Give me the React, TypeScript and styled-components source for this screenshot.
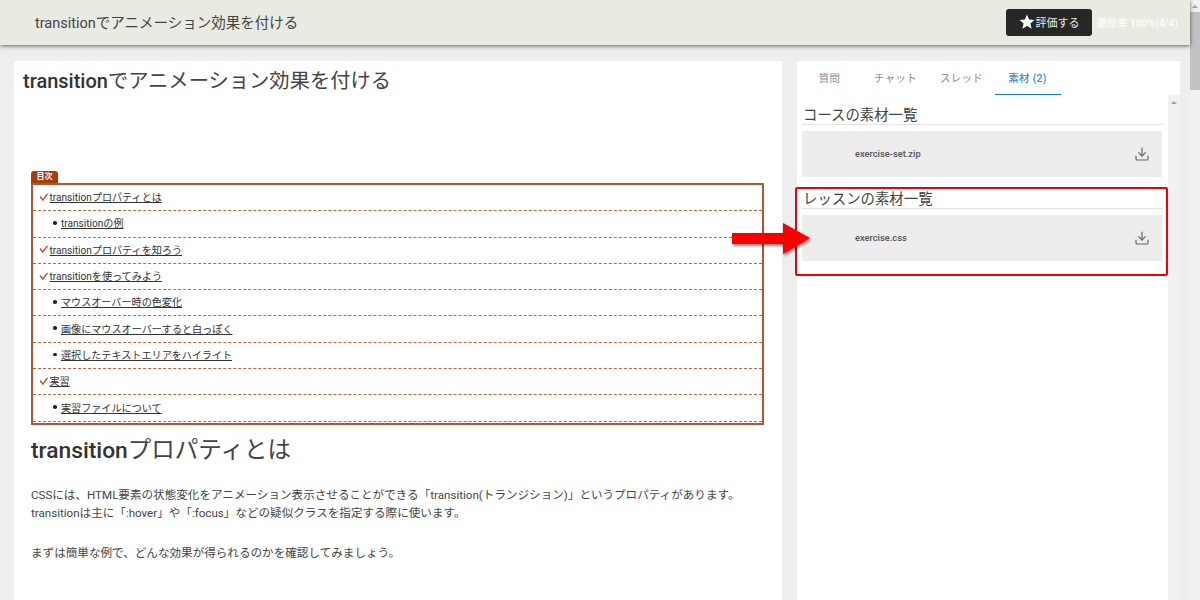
import React from "react";
import styled, { createGlobalStyle } from "styled-components";
import { Download } from "lucide-react";
import { MdStar } from "react-icons/md";

const Global = createGlobalStyle`
  html, body { margin: 0; padding: 0; height: 600px; overflow: hidden; background: #eeeeee; }
  body { font-family: Roboto, "Noto Sans CJK JP", sans-serif; color: #333; }
  * { box-sizing: border-box; }
`;

const Page = styled.div`
  position: relative;
  display: flex;
  width: 1200px;
  height: 600px;
  overflow: hidden;
`;
const Main = styled.div`
  flex: 0 0 1190px;
  display: flex;
  flex-direction: column;
  min-width: 0;
`;
const Header = styled.header`
  position: relative;
  z-index: 2;
  flex: 0 0 45px;
  display: flex;
  align-items: center;
  padding: 0 12px 0 35px;
  background: #e9eae2;
  box-shadow: 0 1px 4px rgba(0, 0, 0, 0.6);
`;
const HeaderTitle = styled.div`
  flex: 1;
  margin-top: -2px;
  font-size: 14.5px;
  color: #444;
`;
const RateButton = styled.button`
  display: flex;
  align-items: center;
  justify-content: center;
  gap: 0;
  width: 86px;
  height: 27px;
  padding: 0 1px 2px 0;
  border: 0;
  border-radius: 3px;
  background: #262626;
  color: #e8e8e8;
  font: inherit;
  font-size: 11px;
`;
const Progress = styled.div`
  width: 81px;
  margin-left: 5px;
  font-size: 10.2px;
  font-weight: 700;
  color: #fbfbf6;
  white-space: nowrap;
`;
const Body = styled.div`
  flex: 1;
  display: grid;
  grid-template-columns: 768px 383px;
  gap: 15px;
  padding: 16px 0 0 14px;
  min-height: 0;
`;
const Article = styled.main`
  background: #fff;
  padding: 8px 9px 0;
  overflow: hidden;
`;
const Title = styled.h1`
  margin: 0;
  font-size: 20px;
  line-height: 24px;
  font-weight: 500;
  color: #333;
`;
const Thin = styled.span<{ $size: number }>`
  font-size: ${(p) => p.$size}px;
  font-weight: 400;
  color: #444;
`;
const Content = styled.div`
  margin: 78px 9px 0 8px;
`;
const TocTag = styled.div`
  width: 27px;
  height: 12px;
  border-radius: 3px 3px 0 0;
  background: #a83c0a;
  color: #fff;
  font-size: 8px;
  font-weight: 700;
  line-height: 12px;
  text-align: center;
`;
const Toc = styled.nav`
  border: 2px solid #b8532e;
  padding-bottom: 1px;
`;
const TocRow = styled.div<{ $sub?: boolean }>`
  display: flex;
  align-items: center;
  height: 26.3px;
  padding: 0 0 2px ${(p) => (p.$sub ? "20px" : "6px")};
  border-bottom: 1px dashed #c9633a;
  font-size: 10.1px;
  color: #333;
`;
const Bullet = styled.span`
  flex: none;
  width: 3.5px;
  height: 3.5px;
  margin-right: 4.5px;
  border-radius: 50%;
  background: #222;
`;
const Check = styled.svg`
  flex: none;
  width: 10px;
  height: 8px;
  margin-right: 0.5px;
`;
const TocLink = styled.a`
  color: #333;
  text-decoration: underline;
`;
const Heading = styled.h2`
  margin: 10px 0 0;
  font-size: 22.8px;
  line-height: 30px;
  font-weight: 500;
  color: #333;
`;
const Para = styled.p<{ $gap: number }>`
  margin: ${(p) => p.$gap}px 0 0;
  font-size: 11.58px;
  line-height: 18px;
  color: #444;
`;
const Side = styled.aside`
  background: #fff;
  display: flex;
  flex-direction: column;
  min-height: 0;
`;
const Tabs = styled.div`
  flex: 0 0 34px;
  display: flex;
`;
const Tab = styled.div<{ $active?: boolean }>`
  flex: 0 0 66px;
  display: flex;
  align-items: center;
  justify-content: center;
  padding: 0 1px 1px 0;
  font-size: 10.5px;
  letter-spacing: 0.25px;
  color: ${(p) => (p.$active ? "#4a86d8" : "#8a8a8a")};
  font-weight: ${(p) => (p.$active ? 500 : 400)};
  border-bottom: 1px solid ${(p) => (p.$active ? "#1976d2" : "transparent")};
`;
const SideBody = styled.div`
  flex: 1;
  display: flex;
  min-height: 0;
`;
const SideContent = styled.div`
  flex: 1;
  padding: 11px 6px 0 5px;
`;
const SideHeading = styled.h3`
  margin: 0 -1px 6px 0;
  height: 19px;
  padding-left: 1px;
  border-bottom: 1px solid #e4e4e4;
  font-size: 14.4px;
  font-weight: 400;
  line-height: 19px;
  color: #444;
`;
const FileRow = styled.div`
  display: flex;
  align-items: center;
  justify-content: space-between;
  height: 46px;
  margin-bottom: 13px;
  padding: 0 12px 0 53px;
  background: #ededed;
  font-size: 9.3px;
  font-weight: 500;
  color: #555;
`;
const FileName = styled.span`
  margin-top: -2px;
`;
const FileIcon = styled(Download)`
  flex: none;
  color: #666;
`;
const InnerTrack = styled.div`
  flex: 0 0 12px;
  background: #f1f1f1;
  display: flex;
  justify-content: center;
  padding-top: 6px;
`;
const UpArrow = styled.span`
  width: 0;
  height: 0;
  border-left: 3px solid transparent;
  border-right: 3px solid transparent;
  border-bottom: 3px solid #a3a3a3;
`;
const PageTrack = styled.div`
  flex: 0 0 10px;
  background: #f1f1f1;
  display: flex;
  flex-direction: column;
  align-items: center;
  padding-top: 5px;
`;
const PageThumb = styled.div`
  align-self: stretch;
  height: 78px;
  margin-top: 4px;
  background: #c1c1c1;
`;
const Highlight = styled.div`
  position: absolute;
  left: 795px;
  top: 187px;
  width: 373px;
  height: 89px;
  border: 2px solid #f00000;
  border-radius: 2px;
  pointer-events: none;
`;
const ArrowMark = styled.svg`
  position: absolute;
  left: 730px;
  top: 221px;
  width: 84px;
  height: 38px;
  filter: drop-shadow(1px 2px 1.5px rgba(0, 0, 0, 0.5));
`;

const toc: { label: string; sub?: boolean }[] = [
  { label: "transitionプロパティとは" },
  { label: "transitionの例", sub: true },
  { label: "transitionプロパティを知ろう" },
  { label: "transitionを使ってみよう" },
  { label: "マウスオーバー時の色変化", sub: true },
  { label: "画像にマウスオーバーすると白っぽく", sub: true },
  { label: "選択したテキストエリアをハイライト", sub: true },
  { label: "実習" },
  { label: "実習ファイルについて", sub: true },
];

export default function App() {
  return (
    <Page>
      <Global />
      <Main>
        <Header>
          <HeaderTitle>transitionでアニメーション効果を付ける</HeaderTitle>
          <RateButton>
            <MdStar size={18} color="#fff" />
            評価する
          </RateButton>
          <Progress>進捗率 100%(4/4)</Progress>
        </Header>
        <Body>
          <Article>
            <Title>
              transition<Thin $size={20.3}>でアニメーション効果を付ける</Thin>
            </Title>
            <Content>
              <TocTag>目次</TocTag>
              <Toc>
                {toc.map((t, i) => (
                  <TocRow key={i} $sub={t.sub}>
                    {t.sub ? (
                      <Bullet />
                    ) : (
                      <Check viewBox="0 0 10 8">
                        <path d="M1 3.5 L3.8 7 L8.5 0.8" fill="none" stroke="#b8532e" strokeWidth="1.4" />
                      </Check>
                    )}
                    <TocLink>{t.label}</TocLink>
                  </TocRow>
                ))}
              </Toc>
              <Heading>
                transition<Thin $size={23.5}>プロパティとは</Thin>
              </Heading>
              <Para $gap={20}>
                CSSには、HTML要素の状態変化をアニメーション表示させることができる「transition(トランジション)」というプロパティがあります。
                <br />
                transitionは主に「:hover」や「:focus」などの疑似クラスを指定する際に使います。
              </Para>
              <Para $gap={22}>まずは簡単な例で、どんな効果が得られるのかを確認してみましょう。</Para>
            </Content>
          </Article>
          <Side>
            <Tabs>
              <Tab>質問</Tab>
              <Tab>チャット</Tab>
              <Tab>スレッド</Tab>
              <Tab $active>素材 (2)</Tab>
            </Tabs>
            <SideBody>
              <SideContent>
                <SideHeading>コースの素材一覧</SideHeading>
                <FileRow>
                  <FileName>exercise-set.zip</FileName>
                  <FileIcon size={16} strokeWidth={1.8} />
                </FileRow>
                <SideHeading>レッスンの素材一覧</SideHeading>
                <FileRow>
                  <FileName>exercise.css</FileName>
                  <FileIcon size={16} strokeWidth={1.8} />
                </FileRow>
              </SideContent>
              <InnerTrack>
                <UpArrow />
              </InnerTrack>
            </SideBody>
          </Side>
        </Body>
      </Main>
      <PageTrack>
        <UpArrow />
        <PageThumb />
      </PageTrack>
      <Highlight />
      <ArrowMark viewBox="0 0 84 38">
        <path d="M2 12 H53 V2 L80 17 L53 33 V23 H2 Z" fill="#fb0000" />
      </ArrowMark>
    </Page>
  );
}
